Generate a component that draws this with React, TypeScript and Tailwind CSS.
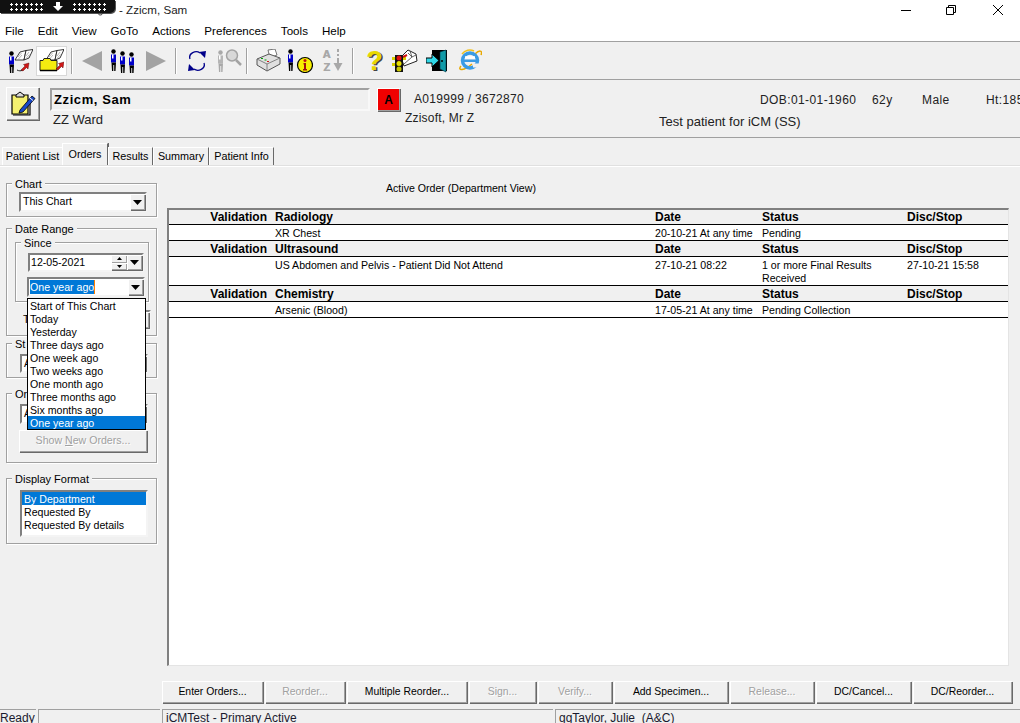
import React from 'react';

const bevel = 'bg-[#f0f0f0] shadow-[inset_1px_1px_0_#fff,inset_-1px_-1px_0_#a0a0a0,1px_1px_0_#696969]';
const sunken = 'border-2 border-t-[#808080] border-l-[#808080] border-r-[#f4f4f4] border-b-[#f4f4f4]';
const etched = 'border border-[#a0a0a0] shadow-[inset_1px_1px_0_#fff,1px_1px_0_#fff]';
const dots = 'w-[35px] h-[10px] bg-[radial-gradient(circle,#fff_1.1px,transparent_1.3px)] bg-[length:5px_5px]';

function Person({ x = 0, y = 0, shirt = '#0000c8', ink = '#000' }: { x?: number; y?: number; shirt?: string; ink?: string }) {
  return (
    <g transform={`translate(${x} ${y})`}>
      <circle cx="3.5" cy="2.5" r="2.2" fill={ink} />
      <path d="M1 5.500h5v8H1z" fill={shirt} />
      <path d="M2 5.500h1.500v4H2z" fill="#fff" />
      <path d="M1.500 13.500h4.500l-.5 8.500H4.200v-6H3.300v6H2z" fill={ink} />
    </g>
  );
}

function Book({ x = 0, y = 0 }: { x?: number; y?: number }) {
  return (
    <g transform={`translate(${x} ${y})`} fill="#fff" stroke="#222" strokeWidth=".9">
      <path d="M0 11 5 3 11 1.500 9 11z" />
      <path d="M9 11 11 1.500 18 .5 14 9z" />
      <path d="M3 8 6.500 4M3.500 10 7 6M11 7l3-4M11 9.500l3.500-4" fill="none" stroke="#999" strokeWidth=".7" />
    </g>
  );
}

function RedArrow({ x = 0, y = 0 }: { x?: number; y?: number }) {
  return <path transform={`translate(${x} ${y})`} d="M0 7 4 3 2.500 1.500 8 0 7 6 5.500 4.500 2 8z" fill="#d01818" stroke="#400" strokeWidth=".4" />;
}

function PatientBook() {
  return (
    <svg width="25" height="24" viewBox="0 0 25 24">
      <Book x={7} y={0} />
      <Person x={0} y={2} />
      <path d="M9 21c4 2 7 0 8-3" fill="none" stroke="#222" />
      <RedArrow x={13} y={14} />
    </svg>
  );
}

function FolderBook() {
  return (
    <svg width="25" height="24" viewBox="0 0 25 24">
      <Book x={7} y={0} />
      <path d="M1 11.500h3l1-2h6l1 2h6v10H1z" fill="#f4ec10" stroke="#222" />
      <path d="M1 21.500h17" stroke="#000" strokeWidth="1.500" />
      <RedArrow x={17} y={13} />
    </svg>
  );
}

function ThreePeople() {
  return (
    <svg width="26" height="24" viewBox="0 0 26 24">
      <Person x={0} y={0} />
      <Person x={9} y={2} />
      <Person x={18} y={3} />
    </svg>
  );
}

function Triangle({ right = false }: { right?: boolean }) {
  return (
    <svg width="22" height="20" viewBox="0 0 22 20">
      <path d={right ? 'M1 0 21 10 1 20z' : 'M21 0 1 10 21 20z'} fill="#a3a3a3" />
    </svg>
  );
}

function Refresh() {
  return (
    <svg width="22" height="22" viewBox="0 0 22 22">
      <path d="M4 9C2 3 10 0 14 3" fill="none" stroke="#00008a" strokeWidth="1.300" />
      <path d="M13 2 20 1 19 8z" fill="#00008a" />
      <path d="M18 13c2 6-6 9-10 6" fill="none" stroke="#00008a" strokeWidth="1.300" />
      <path d="M9 20 2 21 3 14z" fill="#00008a" />
    </svg>
  );
}

function PersonSearch() {
  return (
    <svg width="25" height="23" viewBox="0 0 25 23">
      <Person x={0} y={1} shirt="#b5b5b5" ink="#a8a8a8" />
      <circle cx="15" cy="6.500" r="5.500" fill="#d8d8d8" stroke="#a3a3a3" strokeWidth="1.500" />
      <path d="M19 11l5 5" stroke="#a3a3a3" strokeWidth="2.500" />
    </svg>
  );
}

function Printer() {
  return (
    <svg width="25" height="23" viewBox="0 0 25 23">
      <path d="M12 1 19 0 21 6 14 9z" fill="#fff" stroke="#555" strokeWidth=".8" />
      <path d="M1 10 13 5 24 9 24 15 11 22 1 16z" fill="#e0e0e0" stroke="#444" strokeWidth=".9" />
      <path d="M1 10 11 15 24 9M11 15v7" fill="none" stroke="#777" strokeWidth=".9" />
      <path d="M5 9.500h2M8.500 11h2" stroke="#00a000" />
      <path d="M11 12.500h2" stroke="#d01818" />
    </svg>
  );
}

function PersonInfo() {
  return (
    <svg width="26" height="24" viewBox="0 0 26 24">
      <Person x={0} y={0} />
      <circle cx="18" cy="16" r="7.500" fill="#f8f000" stroke="#000" strokeWidth="1.200" />
      <circle cx="18" cy="11.500" r="1.500" fill="#c01010" />
      <path d="M16.500 14H19v6h1v1.500h-4V20h1v-4.500h-.5z" fill="#a01010" />
    </svg>
  );
}

function Sort() {
  return (
    <div className="w-[23px] h-[26px] flex">
      <div className="w-[13px] flex flex-col items-center text-[11px] font-bold leading-[13px] text-[#a8a8a8] [text-shadow:0.5px_0_0_#a8a8a8]">
        <span>A</span>
        <span>Z</span>
      </div>
      <svg width="10" height="24" viewBox="0 0 10 24">
        <path d="M5 1v3M5 6v2M5 10v5" stroke="#a8a8a8" strokeWidth="2" />
        <path d="M.5 15h9L5 23z" fill="#a8a8a8" />
      </svg>
    </div>
  );
}

function Help() {
  return (
    <div className="w-[17px] h-[26px] flex justify-center text-[27px] leading-[26px] font-bold text-[#e8d800] [text-shadow:1.5px_1px_0_#444]">?</div>
  );
}

function Traffic() {
  return (
    <svg width="26" height="24" viewBox="0 0 26 24">
      <path d="M9 8 16 1 24 5 25 12 12 17z" fill="#fff" stroke="#222" />
      <path d="M18 2l2 6 4-2M16 4l4 4-8 7" fill="none" stroke="#444" strokeWidth=".8" />
      <rect x="3" y="6" width="8" height="17" fill="#111" />
      <path d="M0 8h3v3H0zM0 14h3v3H0zM11 8h3v3h-3z" fill="#d8d000" />
      <circle cx="7" cy="9" r="2.500" fill="#e01010" />
      <circle cx="7" cy="14.500" r="2.500" fill="#e8e000" />
      <circle cx="7" cy="20" r="2.500" fill="#c8c800" />
      <path d="M11 8l4-2" stroke="#d01010" strokeWidth="2" />
    </svg>
  );
}

function Door() {
  return (
    <svg width="22" height="24" viewBox="0 0 22 24">
      <path d="M6 1h15v21H6z" fill="#000" />
      <path d="M14 3 20 1v22l-6-3z" fill="#0f9aa8" stroke="#034" strokeWidth=".6" />
      <circle cx="16" cy="12" r="1" fill="#000" />
      <path d="M0 9h6V5l7 6.500L6 18v-4H0z" fill="#30d8e8" stroke="#000" />
    </svg>
  );
}

function IeLogo() {
  return (
    <svg width="24" height="25" viewBox="0 0 24 25">
      <path d="M3 18C-1 23 6 23 14 16M17 6c4-4 8-4 6 1" fill="none" stroke="#e8a800" strokeWidth="1.500" />
      <circle cx="12" cy="12.500" r="7.500" fill="none" stroke="#3a9be4" strokeWidth="3.500" />
      <path d="M5 11.500h15v2.500H5z" fill="#3a9be4" />
      <path d="M7 9.500h10" stroke="#fff" strokeWidth="2.500" />
      <path d="M15 15.500h8l-3 4h-5z" fill="#f0f0f0" />
      <path d="M4 6c3-4 8-5 12-3" fill="none" stroke="#f0c020" strokeWidth="1.500" />
    </svg>
  );
}

function NotesIcon() {
  return (
    <svg width="27" height="27" viewBox="0 0 27 27">
      <path d="M3 5h16v19H3z" fill="#f4f070" stroke="#000" strokeWidth="1.200" />
      <path d="M7 5l4-3 4 3v2H7z" fill="#d8d8d8" stroke="#000" />
      <path d="M4 25h17V9" fill="none" stroke="#000" strokeWidth="1.200" />
      <path d="M11 20 23 6l3 2.500L14 22l-4 1z" fill="#1848c8" stroke="#000" strokeWidth=".8" />
      <path d="M21 8l3 2.500" stroke="#fff" />
    </svg>
  );
}

function Sep() {
  return <div className="w-px h-[26px] bg-[#a0a0a0] shadow-[1px_0_0_#fff]" />;
}

function DropBtn() {
  return (
    <div className={`${bevel} w-[15px] h-full flex items-center justify-center shrink-0`}>
      <svg width="9" height="5" viewBox="0 0 9 5">
        <path d="M0 0h9L4.500 5z" fill="#000" />
      </svg>
    </div>
  );
}

function Combo({ children, className }: { children?: React.ReactNode; className: string }) {
  return (
    <div className={`${sunken} bg-white flex items-stretch ${className}`}>
      <div className="flex-1 min-w-0 pl-[1px] flex items-center whitespace-nowrap overflow-hidden">{children}</div>
      <DropBtn />
    </div>
  );
}

function Group({ title, className, children }: { title: string; className: string; children?: React.ReactNode }) {
  return (
    <div className={`relative ${etched} ${className}`}>
      <span className="absolute -top-[7px] left-[5px] bg-[#f0f0f0] px-[3px] leading-[14px] text-[11px] whitespace-nowrap">{title}</span>
      {children}
    </div>
  );
}

function Tab({ label, active = false, width }: { label: string; active?: boolean; width: string }) {
  return (
    <div
      className={`${width} flex items-center justify-center border-r border-r-[#696969] border-l border-l-white border-t border-t-white ${
        active ? 'h-[22px] -ml-px bg-[#f0f0f0] shadow-[1px_0_0_#696969]' : 'h-[18px]'
      }`}
    >
      {label}
    </div>
  );
}

function ActionBtn({ label, width, disabled = false }: { label: string; width: string; disabled?: boolean }) {
  return (
    <div
      className={`${bevel} ${width} h-[22px] flex items-center justify-center text-[10.400px] ${
        disabled ? 'text-[#a0a0a0] [text-shadow:1px_1px_0_#fff]' : 'text-black'
      }`}
    >
      {label}
    </div>
  );
}

const gridCols = 'grid grid-cols-[106px_380px_107px_145px_1fr] border-b border-b-black';

function HeaderRow({ dept, height }: { dept: string; height: string }) {
  return (
    <div className={`${gridCols} ${height} bg-[#f0f0f0] font-bold text-[12px] leading-[13px] items-center`}>
      <div className="text-right pr-[8px]">Validation</div>
      <div>{dept}</div>
      <div>Date</div>
      <div>Status</div>
      <div>Disc/Stop</div>
    </div>
  );
}

function OrderRow({ name, date, status, stop, height }: { name: string; date: string; status: string; stop?: string; height: string }) {
  return (
    <div className={`${gridCols} ${height} bg-white leading-[13px] pt-[2px]`}>
      <div />
      <div>{name}</div>
      <div>{date}</div>
      <div className="pr-[20px]">{status}</div>
      <div>{stop}</div>
    </div>
  );
}

const ranges = [
  'Start of This Chart',
  'Today',
  'Yesterday',
  'Three days ago',
  'One week ago',
  'Two weeks ago',
  'One month ago',
  'Three months ago',
  'Six months ago',
  'One year ago',
];

export default function App() {
  return (
    <div className="relative w-[1020px] h-[723px] overflow-hidden flex flex-col bg-[#f0f0f0] text-black text-[10.600px] font-['Liberation_Sans',Arial,sans-serif]">
      {/* remote session bar */}
      <div className="absolute top-0 left-0 w-[115px] h-[13px] bg-[#111] rounded-br-[5px] flex items-center justify-center gap-[9px] shadow-[1px_1px_0_#555]">
        <div className={dots} />
        <svg width="10" height="9" viewBox="0 0 10 9">
          <path d="M3 0h4v4h3L5 9 0 4h3z" fill="#fff" />
        </svg>
        <div className={dots} />
      </div>
      <svg className="absolute left-[97px] top-[13px]" width="7" height="3" viewBox="0 0 7 3">
        <path d="M1 .5c1 2 4 2 5-.5" fill="none" stroke="#333" />
      </svg>

      {/* title + menu */}
      <div className="bg-white h-[41px] shrink-0 flex flex-col text-[11.600px]">
        <div className="h-[20px] flex items-center justify-between">
          <span className="ml-[119px] text-[#222]">- Zzicm, Sam</span>
          <svg width="120" height="16" viewBox="0 0 120 16">
            <path d="M1 8.500h10" stroke="#000" />
            <path d="M46.500 5.500h7v7h-7zM48.500 5.500v-2h7v7h-2" fill="none" stroke="#000" />
            <path d="M93 3l10 10M103 3 93 13" stroke="#000" />
          </svg>
        </div>
        <div className="h-[21px] flex items-center gap-[14px] pl-[5px]">
          {['File', 'Edit', 'View', 'GoTo', 'Actions', 'Preferences', 'Tools', 'Help'].map((m) => (
            <span key={m}>{m}</span>
          ))}
        </div>
      </div>

      {/* toolbar */}
      <div className="h-[39px] shrink-0 border-t border-t-[#a0a0a0] border-b border-b-[#a0a0a0] flex items-center pl-[8px]">
        <PatientBook />
        <div className="ml-[3px] w-[31px] h-[30px] bg-white border border-[#d8d8d8] flex items-center justify-center">
          <FolderBook />
        </div>
        <div className="ml-[4px]"><Sep /></div>
        <div className="ml-[9px]"><Triangle /></div>
        <div className="ml-[7px]"><ThreePeople /></div>
        <div className="ml-[9px]"><Triangle right /></div>
        <div className="ml-[8px]"><Sep /></div>
        <div className="ml-[10px]"><Refresh /></div>
        <div className="ml-[9px]"><PersonSearch /></div>
        <div className="ml-[4px]"><Sep /></div>
        <div className="ml-[9px]"><Printer /></div>
        <div className="ml-[6px]"><PersonInfo /></div>
        <div className="ml-[7px]"><Sort /></div>
        <div className="ml-[9px]"><Sep /></div>
        <div className="ml-[13px]"><Help /></div>
        <div className="ml-[9px]"><Traffic /></div>
        <div className="ml-[8px]"><Door /></div>
        <div className="ml-[10px]"><IeLogo /></div>
      </div>

      {/* patient banner */}
      <div className="h-[58px] shrink-0 border-b border-b-[#a0a0a0] flex pt-[7px] text-[13px] text-[#222]">
        <div className={`${bevel} ml-[6px] w-[33px] h-[33px] shrink-0 flex items-center justify-center`}>
          <NotesIcon />
        </div>
        <div className="ml-[11px] w-[320px] shrink-0 flex flex-col">
          <div className="h-[23px] mt-[1px] border-2 border-t-[#a0a0a0] border-l-[#a0a0a0] border-r-[#f8f8f8] border-b-[#f8f8f8] flex items-center pl-[2px] font-bold tracking-[0.6px] text-black">
            Zzicm, Sam
          </div>
          <div className="mt-[1px] pl-[3px] leading-[16px]">ZZ Ward</div>
        </div>
        <div className={`${bevel} ml-[7px] mt-[1px] w-[23px] h-[23px] shrink-0 !bg-[#f00000] flex items-center justify-center font-bold text-[12px] text-black`}>
          A
        </div>
        <div className="w-[110px] shrink-0 flex flex-col ml-[5px] whitespace-nowrap">
          <div className="pl-[9px] mt-[5px] leading-[15px] text-[12px] tracking-[0.3px]">A019999 / 3672870</div>
          <div className="mt-[4px] leading-[15px] text-[12px] tracking-[0.2px]">Zzisoft, Mr Z</div>
        </div>
        <div className="flex flex-col ml-[144px] whitespace-nowrap text-[12px]">
          <div className="ml-[101px] mt-[6px] leading-[15px] flex tracking-[0.4px]">
            <span className="w-[112px] shrink-0">DOB:01-01-1960</span>
            <span className="w-[50px] shrink-0">62y</span>
            <span className="w-[64px] shrink-0">Male</span>
            <span>Ht:185</span>
          </div>
          <div className="mt-[6px] leading-[15px] text-[13px]">Test patient for iCM (SS)</div>
        </div>
      </div>

      {/* tabs */}
      <div className="h-[28px] shrink-0 flex items-end pl-[2px] border-b border-b-[#e0e0e0] shadow-[0_1px_0_#fff] text-[10.800px]">
        <Tab label="Patient List" width="w-[61px]" />
        <Tab label="Orders" active width="w-[46px]" />
        <Tab label="Results" width="w-[45px]" />
        <Tab label="Summary" width="w-[56px]" />
        <Tab label="Patient Info" width="w-[65px]" />
      </div>

      {/* body */}
      <div className="flex-1 min-h-0 flex">
        <div className="w-[167px] shrink-0 pl-[6px] pr-[10px] pt-[17px]">
          <Group title="Chart" className="h-[34px]">
            <Combo className="ml-[12px] mt-[8px] w-[128px] h-[20px]">
              <span className="pl-[1px]">This Chart</span>
            </Combo>
          </Group>
          <Group title="Date Range" className="h-[108px] mt-[11px]">
            <Group title="Since" className="ml-[8px] mt-[13px] w-[134px] h-[60px]">
              <div className={`${sunken} ml-[12px] mt-[10px] w-[116px] h-[19px] bg-white flex items-stretch`}>
                <div className="flex-1 pl-[1px] flex items-center">12-05-2021</div>
                <div className="w-[16px] flex flex-col">
                  <div className={`${bevel} flex-1 flex items-center justify-center`}>
                    <svg width="5" height="3" viewBox="0 0 5 3"><path d="M2.500 0 5 3H0z" fill="#000" /></svg>
                  </div>
                  <div className={`${bevel} flex-1 flex items-center justify-center`}>
                    <svg width="5" height="3" viewBox="0 0 5 3"><path d="M0 0h5L2.500 3z" fill="#000" /></svg>
                  </div>
                </div>
                <DropBtn />
              </div>
              <Combo className="ml-[11px] mt-[5px] w-[118px] h-[20px]">
                <span className="bg-[#0078d7] text-white leading-[14px] border-r border-r-[#ff8000]">One year ago</span>
              </Combo>
            </Group>
            <span className="absolute left-[16px] top-[82px] text-[11px]">T</span>
            <Combo className="ml-[22px] mt-[8px] w-[122px] h-[20px]" />
          </Group>
          <Group title="St" className="h-[35px] mt-[7px]">
            <Combo className="ml-[13px] mt-[10px] w-[128px] h-[19px]">
              <span className="pl-[1px]">A</span>
            </Combo>
          </Group>
          <Group title="Or" className="h-[70px] mt-[15px]">
            <Combo className="ml-[13px] mt-[10px] w-[128px] h-[20px]">
              <span className="pl-[1px]">A</span>
            </Combo>
            <div className={`${bevel} ml-[12px] mt-[6px] w-[128px] h-[22px] flex items-center justify-center text-[#a0a0a0] [text-shadow:1px_1px_0_#fff]`}>
              <span>Show <u>N</u>ew Orders...</span>
            </div>
          </Group>
          <Group title="Display Format" className="h-[66px] mt-[15px]">
            <div className={`${sunken} ml-[13px] mt-[11px] w-[128px] h-[47px] bg-white`}>
              <div className="h-[13px] leading-[14px] bg-[#0078d7] text-white pl-[2px]">By Department</div>
              <div className="h-[13px] leading-[14px] pl-[2px]">Requested By</div>
              <div className="h-[13px] leading-[14px] pl-[2px]">Requested By details</div>
            </div>
          </Group>
        </div>

        <div className="flex-1 min-w-0 flex flex-col pr-[8px]">
          <div className="ml-[219px] mt-[15px] h-[14px] leading-[14px]">Active Order (Department View)</div>
          <div className="mt-[13px] mr-[3px] h-[458px] border-t-2 border-l-2 border-t-[#808080] border-l-[#808080] border-r border-b border-r-[#e4e4e4] border-b-[#e4e4e4] bg-white">
            <HeaderRow dept="Radiology" height="h-[15px]" />
            <OrderRow name="XR Chest" date="20-10-21 At any time" status="Pending" height="h-[16px]" />
            <HeaderRow dept="Ultrasound" height="h-[16px] pt-[1px]" />
            <OrderRow
              name="US Abdomen and Pelvis - Patient Did Not Attend"
              date="27-10-21 08:22"
              status="1 or more Final Results Received"
              stop="27-10-21 15:58"
              height="h-[29px]"
            />
            <HeaderRow dept="Chemistry" height="h-[16px] pt-[1px]" />
            <OrderRow name="Arsenic (Blood)" date="17-05-21 At any time" status="Pending Collection" height="h-[16px]" />
          </div>
          <div className="mt-[15px] -ml-[5px] flex gap-[2px]">
            <ActionBtn label="Enter Orders..." width="w-[101px]" />
            <ActionBtn label="Reorder..." width="w-[80px]" disabled />
            <ActionBtn label="Multiple Reorder..." width="w-[120px]" />
            <ActionBtn label="Sign..." width="w-[67px]" disabled />
            <ActionBtn label="Verify..." width="w-[74px]" disabled />
            <ActionBtn label="Add Specimen..." width="w-[114px]" />
            <ActionBtn label="Release..." width="w-[84px]" disabled />
            <ActionBtn label="DC/Cancel..." width="w-[95px]" />
            <ActionBtn label="DC/Reorder..." width="w-[99px]" />
          </div>
        </div>
      </div>

      {/* status bar */}
      <div className="h-[14px] shrink-0 flex gap-[2px] text-[12px] leading-[16px] text-[#1a1a2e] overflow-hidden whitespace-pre">
        <div className="w-[36px] border-t border-t-[#a0a0a0]">Ready</div>
        <div className="w-[122px] border-t border-l border-[#a0a0a0]" />
        <div className="w-[391px] pl-[3px] border-t border-l border-[#a0a0a0]">iCMTest - Primary Active</div>
        <div className="flex-1 pl-[3px] border-t border-l border-[#a0a0a0]">ggTaylor, Julie  (A&amp;C)</div>
      </div>

      {/* open combo list */}
      <div className="absolute left-[27px] top-[298px] w-[119px] h-[132px] bg-white border border-black">
        {ranges.map((r, i) => (
          <div key={r} className={`h-[13px] leading-[14px] pl-[2px] ${i === ranges.length - 1 ? 'bg-[#0078d7] text-white' : ''}`}>
            {r}
          </div>
        ))}
      </div>
    </div>
  );
}
